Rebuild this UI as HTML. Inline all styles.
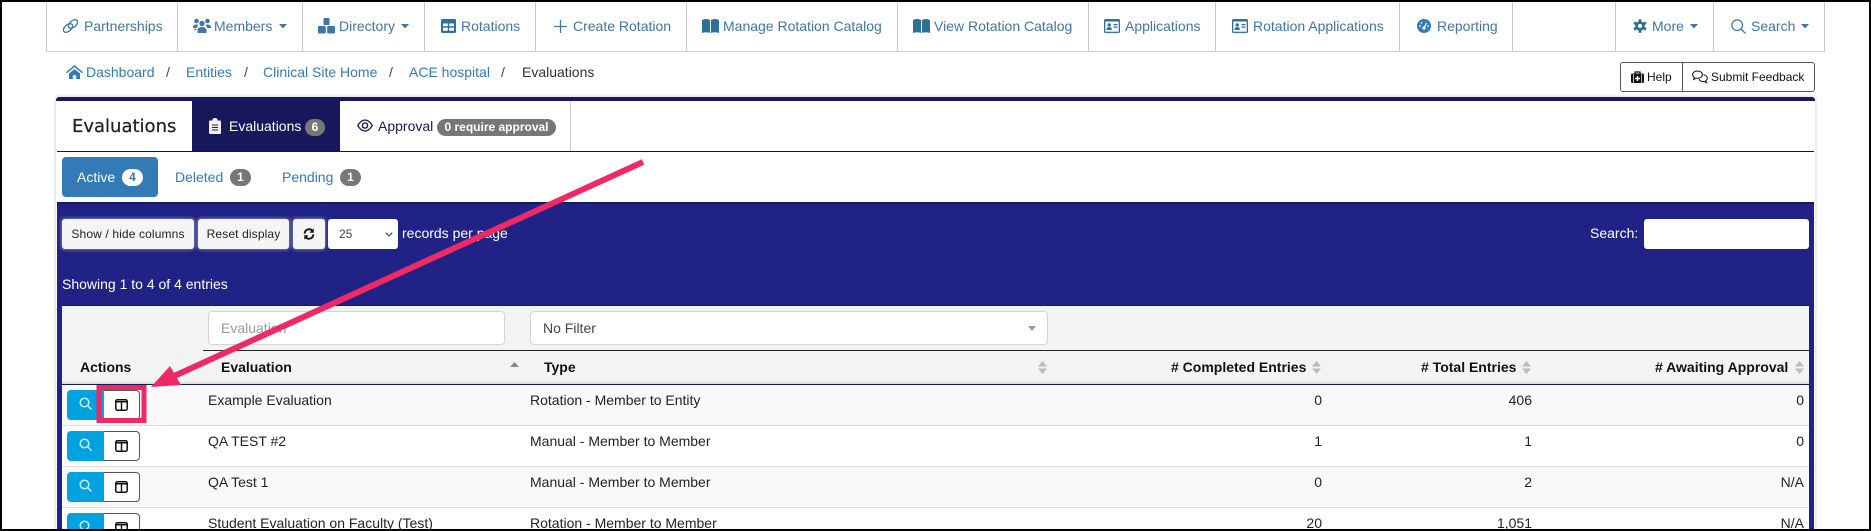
<!DOCTYPE html>
<html lang="en"><head><meta charset="utf-8"><title>Evaluations</title>
<style>
html,body{margin:0;padding:0;background:#fff}
#p{position:relative;width:1871px;height:531px;overflow:hidden;background:#fff;font:14px/20px "Liberation Sans",sans-serif;color:#222}
#p div,#p svg,#p span.t{position:absolute}
.t{white-space:nowrap;line-height:20px}
.n{color:#3f76a6;top:16px}
.b{color:#337ab7;top:62px}
.v{background:#c9c9c9;width:1px;top:2px;height:49px}
.s{color:#444;top:62px}
.w{color:#fff}
.h{font-weight:bold;color:#111;top:357px}
.c{color:#222}
.r{text-align:right;width:100px}
.bd{background:#777;color:#fff;font-weight:bold;font-size:12px;line-height:17px;height:17px;border-radius:9px;text-align:center}
.btn{background:#f5f5f5;border-radius:3px;top:219px;height:30px;box-shadow:0 0 3px 1px rgba(190,190,220,.55);color:#222;font-size:12px;line-height:30px;text-align:center;white-space:nowrap;letter-spacing:.13px}
.field{background:#fff;border:1px solid #d5d5d5;border-radius:4px;box-sizing:border-box;top:311px;height:34px;line-height:32px}
.blue{background:#00a3e0;left:67px;width:38px;height:30px;border-radius:4px 0 0 4px}
.out{background:#fff;left:104px;width:36px;height:30px;box-sizing:border-box;border:1px solid #555;border-left:0;border-radius:0 4px 4px 0}
.line{background:#ddd;height:1px;left:62px;width:1747px}
</style></head><body><div id="p">

<!-- nav -->
<div style="left:46px;top:2px;width:1779px;height:49px;background:#fff"></div>
<div style="left:46px;top:51px;width:1779px;height:1px;background:#d0d0d0"></div>
<div class="v" style="left:46px"></div><div class="v" style="left:177px"></div><div class="v" style="left:302px"></div><div class="v" style="left:424px"></div><div class="v" style="left:535px"></div><div class="v" style="left:686px"></div><div class="v" style="left:897px"></div><div class="v" style="left:1088px"></div><div class="v" style="left:1215px"></div><div class="v" style="left:1399px"></div><div class="v" style="left:1512px"></div><div class="v" style="left:1615px"></div><div class="v" style="left:1713px"></div><div class="v" style="left:1824px"></div>

<svg style="left:62px;top:18px" width="17" height="16" viewBox="0 0 17 16" fill="none" stroke="#3f76a6" stroke-width="1.300"><ellipse cx="6" cy="10" rx="5.400" ry="3.200" transform="rotate(-42 6 10)"/><ellipse cx="11" cy="6" rx="5.400" ry="3.200" transform="rotate(-42 11 6)"/></svg>
<span class="t n" style="left:84px">Partnerships</span>

<svg style="left:193px;top:18px" width="18" height="16" viewBox="0 0 18 16" fill="#3f76a6"><circle cx="3.500" cy="3" r="2.300"/><circle cx="14.500" cy="3" r="2.300"/><circle cx="9" cy="5.500" r="2.700"/><path d="M0 9.500q0-3 3.500-3 1.500 0 2 .5-1.500 1-1.500 3H0zM18 9.500q0-3-3.500-3-1.500 0-2 .5 1.500 1 1.500 3H18z"/><path d="M4.500 15v-2.500q0-3.500 4.500-3.500t4.500 3.500V15zM1 11h2.500v1H1z"/></svg>
<span class="t n" style="left:214px">Members</span>
<svg style="left:279px;top:24px" width="8" height="5"><path d="M0 0h8L4 4.500z" fill="#3f76a6"/></svg>

<svg style="left:318px;top:18px" width="17" height="16" viewBox="0 0 17 16" fill="#3f76a6"><rect x="5.500" y="0" width="6" height="7" rx=".8"/><rect x="0" y="8" width="7.800" height="7.500" rx="1"/><rect x="9.200" y="8" width="7.800" height="7.500" rx="1"/></svg>
<span class="t n" style="left:339px">Directory</span>
<svg style="left:401px;top:24px" width="8" height="5"><path d="M0 0h8L4 4.500z" fill="#3f76a6"/></svg>

<svg style="left:441px;top:19px" width="15" height="14" viewBox="0 0 15 14"><rect width="15" height="14" rx="1.500" fill="#2f6e9e"/><path d="M2 4.500h4.800v2.700H2zM8.200 4.500H13v2.700H8.200zM2 8.700h4.800v3H2zM8.200 8.700H13v3H8.200z" fill="#fff"/></svg>
<span class="t n" style="left:461px">Rotations</span>

<svg style="left:554px;top:20px" width="13" height="13"><path d="M6.500 0v13M0 6.500h13" stroke="#3f76a6" stroke-width="1.300"/></svg>
<span class="t n" style="left:573px">Create Rotation</span>

<svg style="left:702px;top:19px" width="17" height="14" viewBox="0 0 17 14" fill="#2f7196"><path d="M0 1q4-2 8 0v13q-4-1.500-8 0zM8.900 1q4-2 8.100 0v13q-4-1.500-8.100 0z"/></svg>
<span class="t n" style="left:723px">Manage Rotation Catalog</span>
<svg style="left:913px;top:19px" width="17" height="14" viewBox="0 0 17 14" fill="#2f7196"><path d="M0 1q4-2 8 0v13q-4-1.500-8 0zM8.900 1q4-2 8.100 0v13q-4-1.500-8.100 0z"/></svg>
<span class="t n" style="left:934px">View Rotation Catalog</span>

<svg style="left:1104px;top:19px" width="16" height="14" viewBox="0 0 16 14"><rect width="16" height="14" rx="1.500" fill="#2f6e9e"/><rect x="1.300" y="2.500" width="13.400" height="10.200" fill="#fff"/><circle cx="5.200" cy="6" r="1.700" fill="#2f6e9e"/><path d="M2.500 11q0-3 2.700-3t2.700 3zM9.500 5h4v1.300h-4zM9.500 7.500h4v1.300h-4z" fill="#2f6e9e"/></svg>
<span class="t n" style="left:1125px">Applications</span>
<svg style="left:1232px;top:19px" width="16" height="14" viewBox="0 0 16 14"><rect width="16" height="14" rx="1.500" fill="#2f6e9e"/><rect x="1.300" y="2.500" width="13.400" height="10.200" fill="#fff"/><circle cx="5.200" cy="6" r="1.700" fill="#2f6e9e"/><path d="M2.500 11q0-3 2.700-3t2.700 3zM9.500 5h4v1.300h-4zM9.500 7.500h4v1.300h-4z" fill="#2f6e9e"/></svg>
<span class="t n" style="left:1253px">Rotation Applications</span>

<svg style="left:1417px;top:19px" width="14" height="14" viewBox="0 0 14 14"><circle cx="7" cy="7" r="7" fill="#337ab7"/><circle cx="7" cy="9" r="1.600" fill="#fff"/><path d="M7 9l2.500-5" stroke="#fff" stroke-width="1.200"/><circle cx="3" cy="7" r=".9" fill="#fff"/><circle cx="4.500" cy="3.800" r=".9" fill="#fff"/><circle cx="11" cy="7" r=".9" fill="#fff"/></svg>
<span class="t n" style="left:1437px">Reporting</span>

<svg style="left:1633px;top:19px" width="14" height="14" viewBox="0 0 14 14"><circle cx="7" cy="7" r="4.800" fill="#2f6e8e"/><path d="M7 .2v13.600M1.100 3.600l11.800 6.800M12.900 3.600L1.100 10.400" stroke="#2f6e8e" stroke-width="2.800"/><circle cx="7" cy="7" r="2" fill="#fff"/></svg>
<span class="t n" style="left:1652px">More</span>
<svg style="left:1690px;top:24px" width="8" height="5"><path d="M0 0h8L4 4.500z" fill="#3f76a6"/></svg>

<svg style="left:1731px;top:19px" width="15" height="15" viewBox="0 0 15 15" fill="none" stroke="#3f76a6" stroke-width="1.300"><circle cx="6.200" cy="6.200" r="5.300"/><path d="M10 10l4.500 4.500"/></svg>
<span class="t n" style="left:1751px">Search</span>
<svg style="left:1801px;top:24px" width="8" height="5"><path d="M0 0h8L4 4.500z" fill="#3f76a6"/></svg>

<!-- breadcrumb -->
<svg style="left:66px;top:65px" width="17" height="14" viewBox="0 0 17 14" fill="#337ab7"><path d="M8.500 0L17 7.200l-1 1L8.500 2 1 8.200l-1-1z"/><path d="M3 8.500L8.500 4 14 8.500V14h-3.800v-3.800H6.800V14H3z"/></svg>
<span class="t b" style="left:86px">Dashboard</span>
<span class="t s" style="left:166px">/</span>
<span class="t b" style="left:186px">Entities</span>
<span class="t s" style="left:244px">/</span>
<span class="t b" style="left:263px">Clinical Site Home</span>
<span class="t s" style="left:389px">/</span>
<span class="t b" style="left:409px">ACE hospital</span>
<span class="t s" style="left:501px">/</span>
<span class="t" style="left:522px;top:62px;color:#333">Evaluations</span>

<!-- help -->
<div style="left:1620px;top:62px;width:195px;height:30px;box-sizing:border-box;border:1px solid #555;border-radius:3px"></div>
<div style="left:1682px;top:62px;width:1px;height:30px;background:#555"></div>
<svg style="left:1631px;top:71px" width="13" height="12" viewBox="0 0 13 12"><path d="M4 3V1h5v2" fill="none" stroke="#111" stroke-width="1.200"/><rect y="2.500" width="13" height="9.500" rx="1.500" fill="#111"/><path d="M2.300 3v9M10.700 3v9" stroke="#fff" stroke-width=".7"/><path d="M6.500 5v5M4 7.500h5" stroke="#fff" stroke-width="1.500"/></svg>
<span class="t" style="left:1647px;top:67px;font-size:12px;color:#111">Help</span>
<svg style="left:1692px;top:70px" width="16" height="14" viewBox="0 0 16 14" fill="none" stroke="#111" stroke-width="1"><path d="M5.500 1C2.800 1 .6 2.500.6 4.600c0 1.200.7 2.200 1.800 2.900L1.600 9.500l2.600-1.300c.4.100.9.100 1.300.1 2.700 0 4.900-1.600 4.900-3.700S8.200 1 5.500 1z"/><path d="M11.500 4.800c2.200.3 3.800 1.700 3.800 3.400 0 1-.6 1.900-1.500 2.500l.7 1.900-2.400-1.200c-2.200.3-4.300-.6-5.100-2.300"/></svg>
<span class="t" style="left:1711px;top:67px;font-size:12px;color:#111">Submit Feedback</span>

<!-- panel -->
<div style="left:56px;top:97px;width:1759px;height:434px;background:#fff;box-shadow:0 0 3px 1px rgba(0,0,0,.14);border-radius:3px 3px 0 0"></div>
<div style="left:56px;top:97px;width:1759px;height:4px;background:#18195c;border-radius:3px 3px 0 0"></div>
<div style="left:57px;top:151px;width:1757px;height:1px;background:#111347"></div>
<span class="t" style="left:72px;top:117px;font:500 18px/20px 'DejaVu Sans',sans-serif;color:#222;-webkit-text-stroke:.25px #222">Evaluations</span>
<div style="left:192px;top:101px;width:148px;height:50px;background:#18195c"></div>
<svg style="left:209px;top:118px" width="12" height="16" viewBox="0 0 12 16"><path d="M1 2.500h2.500V1.500a2.500 1.500 0 0 1 5 0v1H11a1 1 0 0 1 1 1V15a1 1 0 0 1-1 1H1a1 1 0 0 1-1-1V3.500a1 1 0 0 1 1-1z" fill="#f2f2f2"/><path d="M3 7h6M3 9.500h6M3 12h6" stroke="#18195c" stroke-width=".9"/></svg>
<span class="t w" style="left:229px;top:116px">Evaluations</span>
<div class="bd" style="left:305px;top:119px;width:20px">6</div>
<svg style="left:357px;top:118px" width="16" height="15" viewBox="0 0 16 15" fill="none" stroke="#18195c"><path d="M.7 7.500Q4 2 8 2t7.300 5.500Q12 13 8 13T.7 7.500z" stroke-width="1.300"/><circle cx="8" cy="7.500" r="2.600" stroke-width="1.400"/></svg>
<span class="t" style="left:378px;top:116px;color:#18195c">Approval</span>
<div class="bd" style="left:437px;top:119px;width:119px">0 require approval</div>
<div style="left:570px;top:101px;width:1px;height:50px;background:#ccc"></div>

<!-- sub tabs -->
<div style="left:62px;top:157px;width:96px;height:40px;background:#337ab7;border-radius:4px"></div>
<span class="t w" style="left:77px;top:167px">Active</span>
<div class="bd" style="left:122px;top:169px;width:21px;background:#fff;color:#337ab7">4</div>
<span class="t" style="left:175px;top:167px;color:#337ab7">Deleted</span>
<div class="bd" style="left:230px;top:169px;width:21px">1</div>
<span class="t" style="left:282px;top:167px;color:#337ab7">Pending</span>
<div class="bd" style="left:340px;top:169px;width:21px">1</div>

<!-- blue area -->
<div style="left:57px;top:202px;width:1757px;height:329px;background:#202385"></div>
<div style="left:57px;top:202px;width:1757px;height:2px;background:#18195c"></div>
<div class="btn" style="left:62px;width:132px">Show / hide columns</div>
<div class="btn" style="left:198px;width:91px">Reset display</div>
<div class="btn" style="left:293px;width:32px"></div>
<svg style="left:303px;top:228px" width="12" height="12" viewBox="0 0 14 14" fill="none" stroke="#111" stroke-width="2.200"><path d="M2 6.500A5 5 0 0 1 11 3.500"/><path d="M12 7.500A5 5 0 0 1 3 10.500"/><path d="M12.500 .5v5h-5z" fill="#111" stroke="none"/><path d="M1.500 13.500v-5h5z" fill="#111" stroke="none"/></svg>
<div style="left:328px;top:219px;width:70px;height:30px;background:#fff;border-radius:3px"></div>
<span class="t" style="left:339px;top:224px;font-size:12px;color:#444">25</span>
<svg style="left:385px;top:232px" width="8" height="5" fill="none" stroke="#444" stroke-width="1.100"><path d="M.7.700L4 4l3.300-3.300"/></svg>
<span class="t w" style="left:402px;top:223px">records per page</span>
<span class="t w" style="left:1590px;top:223px">Search:</span>
<div style="left:1644px;top:219px;width:165px;height:30px;background:#fff;border-radius:3px"></div>
<span class="t w" style="left:62px;top:274px">Showing 1 to 4 of 4 entries</span>

<!-- table -->
<div style="left:62px;top:305px;width:1747px;height:226px;background:#fff"></div>
<div style="left:62px;top:305px;width:1747px;height:1px;background:#18195c"></div>
<div style="left:62px;top:306px;width:1747px;height:78px;background:#f3f3f3"></div>
<div class="field t" style="left:208px;width:297px;padding-left:12px;color:#999">Evaluation</div>
<div class="field t" style="left:530px;width:518px;padding-left:12px;color:#444">No Filter</div>
<svg style="left:1028px;top:326px" width="8" height="5"><path d="M0 0h8L4 5z" fill="#999"/></svg>
<div style="left:203px;top:350px;width:1606px;height:1px;background:#222"></div>
<div style="left:62px;top:382px;width:1747px;height:2px;background:#ddd"></div>
<div style="left:62px;top:384px;width:1747px;height:1px;background:#18195c"></div>

<span class="t h" style="left:80px">Actions</span>
<span class="t h" style="left:221px">Evaluation</span>
<svg style="left:510px;top:362px" width="9" height="5"><path d="M0 5h9L4.500 0z" fill="#888"/></svg>
<span class="t h" style="left:544px">Type</span>
<svg style="left:1038px;top:361px" width="9" height="13" fill="#bbb"><path d="M0 5.500h9L4.500 0zM0 7.500h9L4.500 13z"/></svg>
<span class="t h" style="left:1171px"># Completed Entries</span>
<svg style="left:1312px;top:361px" width="9" height="13" fill="#bbb"><path d="M0 5.500h9L4.500 0zM0 7.500h9L4.500 13z"/></svg>
<span class="t h" style="left:1421px"># Total Entries</span>
<svg style="left:1522px;top:361px" width="9" height="13" fill="#bbb"><path d="M0 5.500h9L4.500 0zM0 7.500h9L4.500 13z"/></svg>
<span class="t h" style="left:1655px"># Awaiting Approval</span>
<svg style="left:1795px;top:361px" width="9" height="13" fill="#bbb"><path d="M0 5.500h9L4.500 0zM0 7.500h9L4.500 13z"/></svg>

<!-- rows -->
<div style="left:62px;top:385px;width:1747px;height:40px;background:#f9f9f9"></div>
<div class="line" style="top:425px"></div>
<div style="left:62px;top:467px;width:1747px;height:40px;background:#f9f9f9"></div>
<div class="line" style="top:466px"></div>
<div class="line" style="top:507px"></div>

<div class="blue" style="top:390px"></div><div class="out" style="top:390px"></div>
<div class="blue" style="top:431px"></div><div class="out" style="top:431px"></div>
<div class="blue" style="top:472px"></div><div class="out" style="top:472px"></div>
<div class="blue" style="top:513px"></div><div class="out" style="top:513px"></div>

<svg style="left:79px;top:397px" width="13" height="13" viewBox="0 0 13 13" fill="none" stroke="#cdeefa" stroke-width="1.500"><circle cx="5.500" cy="5.500" r="4.300"/><path d="M8.500 8.500l4 4"/></svg>
<svg style="left:79px;top:438px" width="13" height="13" viewBox="0 0 13 13" fill="none" stroke="#cdeefa" stroke-width="1.500"><circle cx="5.500" cy="5.500" r="4.300"/><path d="M8.500 8.500l4 4"/></svg>
<svg style="left:79px;top:479px" width="13" height="13" viewBox="0 0 13 13" fill="none" stroke="#cdeefa" stroke-width="1.500"><circle cx="5.500" cy="5.500" r="4.300"/><path d="M8.500 8.500l4 4"/></svg>
<svg style="left:79px;top:520px" width="13" height="13" viewBox="0 0 13 13" fill="none" stroke="#cdeefa" stroke-width="1.500"><circle cx="5.500" cy="5.500" r="4.300"/><path d="M8.500 8.500l4 4"/></svg>

<svg style="left:115px;top:399px" width="13" height="12" viewBox="0 0 13 12"><rect x=".8" y=".8" width="11.400" height="10.400" rx="1.500" fill="none" stroke="#111" stroke-width="1.500"/><path d="M0 2h13v1.500H0zM5.800 2h1.400v9H5.800z" fill="#111"/></svg>
<svg style="left:115px;top:440px" width="13" height="12" viewBox="0 0 13 12"><rect x=".8" y=".8" width="11.400" height="10.400" rx="1.500" fill="none" stroke="#111" stroke-width="1.500"/><path d="M0 2h13v1.500H0zM5.800 2h1.400v9H5.800z" fill="#111"/></svg>
<svg style="left:115px;top:481px" width="13" height="12" viewBox="0 0 13 12"><rect x=".8" y=".8" width="11.400" height="10.400" rx="1.500" fill="none" stroke="#111" stroke-width="1.500"/><path d="M0 2h13v1.500H0zM5.800 2h1.400v9H5.800z" fill="#111"/></svg>
<svg style="left:115px;top:522px" width="13" height="12" viewBox="0 0 13 12"><rect x=".8" y=".8" width="11.400" height="10.400" rx="1.500" fill="none" stroke="#111" stroke-width="1.500"/><path d="M0 2h13v1.500H0zM5.800 2h1.400v9H5.800z" fill="#111"/></svg>

<span class="t c" style="left:208px;top:390px">Example Evaluation</span>
<span class="t c" style="left:530px;top:390px">Rotation - Member to Entity</span>
<span class="t c r" style="left:1222px;top:390px">0</span>
<span class="t c r" style="left:1432px;top:390px">406</span>
<span class="t c r" style="left:1704px;top:390px">0</span>

<span class="t c" style="left:208px;top:431px">QA TEST #2</span>
<span class="t c" style="left:530px;top:431px">Manual - Member to Member</span>
<span class="t c r" style="left:1222px;top:431px">1</span>
<span class="t c r" style="left:1432px;top:431px">1</span>
<span class="t c r" style="left:1704px;top:431px">0</span>

<span class="t c" style="left:208px;top:472px">QA Test 1</span>
<span class="t c" style="left:530px;top:472px">Manual - Member to Member</span>
<span class="t c r" style="left:1222px;top:472px">0</span>
<span class="t c r" style="left:1432px;top:472px">2</span>
<span class="t c r" style="left:1704px;top:472px">N/A</span>

<span class="t c" style="left:208px;top:513px">Student Evaluation on Faculty (Test)</span>
<span class="t c" style="left:530px;top:513px">Rotation - Member to Member</span>
<span class="t c r" style="left:1222px;top:513px">20</span>
<span class="t c r" style="left:1432px;top:513px">1,051</span>
<span class="t c r" style="left:1704px;top:513px">N/A</span>

<!-- annotation -->
<svg style="left:0;top:0" width="1871" height="531">
<rect x="99" y="387.500" width="45" height="33" fill="none" stroke="#ee2a64" stroke-width="5"/>
<path d="M643 162L172 377" stroke="#ee2a64" stroke-width="6"/>
<path d="M151 387L170 366L181 385z" fill="#ee2a64"/>
</svg>

<!-- screenshot border -->
<div style="left:0;top:0;width:1871px;height:531px;box-sizing:border-box;border:2px solid #000"></div>
</div></body></html>
